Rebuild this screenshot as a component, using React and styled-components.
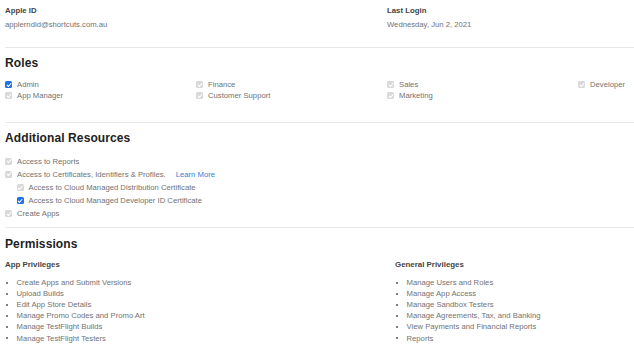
import React from "react";
import styled, { createGlobalStyle } from "styled-components";

const Global = createGlobalStyle`
  html, body { margin: 0; padding: 0; background: #fff; }
  body { font-family: "Liberation Sans", Arial, sans-serif; -webkit-font-smoothing: antialiased; }
`;

const Page = styled.div`
  padding: 5px 0 0 5px;
  width: 629px;
  overflow: hidden;
`;

const InfoRow = styled.div`
  display: grid;
  grid-template-columns: 382px 1fr;
  padding-bottom: 17px;
`;

const InfoCol = styled.div`
  display: flex;
  flex-direction: column;
  gap: 3px;
`;

const Label = styled.div`
  font-size: 7.8px;
  line-height: 11px;
  font-weight: 700;
  color: #444;
`;

const Value = styled.div`
  font-size: 7.7px;
  line-height: 11px;
  color: #727272;
`;

const Divider = styled.hr`
  margin: 0;
  border: 0;
  height: 1px;
  background: #e8e8e8;
`;

const Section = styled.section`
  padding-top: ${(p) => p.$top}px;
  padding-bottom: ${(p) => p.$bottom}px;
`;

const Heading = styled.h2`
  margin: 0;
  font-size: 12px;
  line-height: 16px;
  font-weight: 700;
  color: #222;
  letter-spacing: 0.1px;
`;

const RolesGrid = styled.div`
  display: grid;
  grid-template-columns: repeat(4, 191px);
  grid-template-rows: repeat(2, 11.3px);
  grid-auto-flow: column;
  margin-top: 8px;
`;

const CheckRow = styled.label`
  display: flex;
  align-items: center;
  gap: 5px;
  height: ${(p) => p.$h || 11.3}px;
  padding-left: ${(p) => p.$indent || 0}px;
  font-size: 7.7px;
  color: #727272;
  white-space: nowrap;
`;

const Box = styled.span`
  flex: none;
  width: 7px;
  height: 7px;
  border-radius: 1.5px;
  background: ${(p) => (p.$active ? "#1f6fe5" : "#d9d9d9")};
  display: flex;
  align-items: center;
  justify-content: center;
`;

const Link = styled.a`
  color: #2f7fd8;
  margin-left: 5px;
  text-decoration: none;
`;

const ResourceList = styled.div`
  display: flex;
  flex-direction: column;
  margin-top: 9px;
`;

const PermGrid = styled.div`
  display: grid;
  grid-template-columns: 390px 1fr;
  margin-top: 7.5px;
`;

const SubHeading = styled.div`
  font-size: 7.9px;
  line-height: 12px;
  font-weight: 700;
  color: #444;
`;

const Bullets = styled.ul`
  list-style: none;
  margin: 6px 0 0;
  padding: 0;
`;

const Bullet = styled.li`
  position: relative;
  padding-left: 11.5px;
  font-size: 7.7px;
  line-height: 11.1px;
  color: #727272;
  white-space: nowrap;
  &::before {
    content: "";
    position: absolute;
    left: 1px;
    top: 4.5px;
    width: 2.4px;
    height: 2.4px;
    border-radius: 50%;
    background: #555;
  }
`;

const Check = ({ active }) => (
  <Box $active={active}>
    <svg width="6" height="6" viewBox="0 0 10 10">
      <path d="M2 5.3 L4.2 7.5 L8.2 2.5" fill="none" stroke="#fff" strokeWidth="1.8" strokeLinecap="round" strokeLinejoin="round" />
    </svg>
  </Box>
);

const roles = [
  ["Admin", true],
  ["App Manager", false],
  ["Finance", false],
  ["Customer Support", false],
  ["Sales", false],
  ["Marketing", false],
  ["Developer", false],
];

const appPriv = [
  "Create Apps and Submit Versions",
  "Upload Builds",
  "Edit App Store Details",
  "Manage Promo Codes and Promo Art",
  "Manage TestFlight Builds",
  "Manage TestFlight Testers",
];

const genPriv = [
  "Manage Users and Roles",
  "Manage App Access",
  "Manage Sandbox Testers",
  "Manage Agreements, Tax, and Banking",
  "View Payments and Financial Reports",
  "Reports",
];

export default function App() {
  return (
    <Page>
      <Global />
      <InfoRow>
        <InfoCol>
          <Label>Apple ID</Label>
          <Value>applerndid@shortcuts.com.au</Value>
        </InfoCol>
        <InfoCol>
          <Label>Last Login</Label>
          <Value>Wednesday, Jun 2, 2021</Value>
        </InfoCol>
      </InfoRow>
      <Divider />
      <Section $top={7} $bottom={20}>
        <Heading>Roles</Heading>
        <RolesGrid>
          {roles.map(([name, on]) => (
            <CheckRow key={name}>
              <Check active={on} />
              {name}
            </CheckRow>
          ))}
        </RolesGrid>
      </Section>
      <Divider />
      <Section $top={7} $bottom={6}>
        <Heading>Additional Resources</Heading>
        <ResourceList>
          <CheckRow $h={13.2}><Check />Access to Reports</CheckRow>
          <CheckRow $h={13.2}>
            <Check />Access to Certificates, Identifiers &amp; Profiles.
            <Link href="#">Learn More</Link>
          </CheckRow>
          <CheckRow $h={13.2} $indent={11.5}><Check />Access to Cloud Managed Distribution Certificate</CheckRow>
          <CheckRow $h={13.2} $indent={11.5}><Check active />Access to Cloud Managed Developer ID Certificate</CheckRow>
          <CheckRow $h={13.2}><Check />Create Apps</CheckRow>
        </ResourceList>
      </Section>
      <Divider />
      <Section $top={8} $bottom={0}>
        <Heading>Permissions</Heading>
        <PermGrid>
          <div>
            <SubHeading>App Privileges</SubHeading>
            <Bullets>
              {appPriv.map((t) => <Bullet key={t}>{t}</Bullet>)}
            </Bullets>
          </div>
          <div>
            <SubHeading>General Privileges</SubHeading>
            <Bullets>
              {genPriv.map((t) => <Bullet key={t}>{t}</Bullet>)}
            </Bullets>
          </div>
        </PermGrid>
      </Section>
    </Page>
  );
}
